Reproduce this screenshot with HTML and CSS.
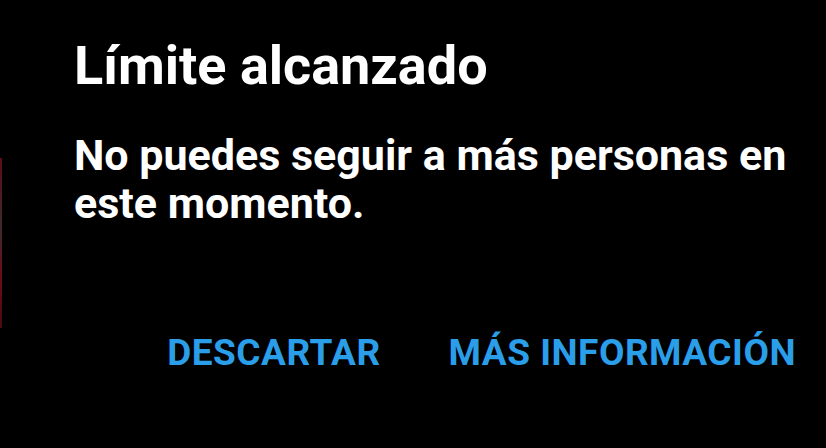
FILE: index.html
```html
<!DOCTYPE html>
<html lang="es">

<head>
    <meta charset="utf-8" />
    <title>Límite alcanzado</title>
    <link rel="stylesheet" href="styles.css">
</head>

<body>
    <div class="backdrop-edge"></div>
    <div class="dialog">
        <h1 class="dialog-title">Límite alcanzado</h1>
        <p class="dialog-message">No puedes seguir a más personas en este momento.</p>
        <div class="dialog-actions">
            <button type="button" class="btn-text">Descartar</button>
            <button type="button" class="btn-text">Más información</button>
        </div>
    </div>
</body>

</html>
```

FILE: styles.css
```css
html,
body {
    height: 100%;
}

body {
    margin: 0;
    overflow: hidden;
    background-color: #000;
    font-family: Roboto, "Liberation Sans", sans-serif;
    position: relative;
}

/* sliver of the screen behind the dialog */
.backdrop-edge {
    position: absolute;
    left: 0;
    top: 158px;
    width: 2px;
    height: 170px;
    background: linear-gradient(#5e0c14, #3d2a2c 40%, #6a0d16 70%, #4a0a10);
}

.dialog {
    padding: 34px 30px 0 74px;
}

.dialog-title {
    margin: 0;
    color: #fff;
    font-size: 54px;
    font-weight: 700;
    line-height: 64px;
}

.dialog-message {
    margin: 33px 0 0;
    color: #fff;
    font-size: 43px;
    font-weight: 700;
    line-height: 48px;
}

.dialog-actions {
    display: flex;
    justify-content: flex-end;
    gap: 68px;
    margin-top: 104px;
}

.btn-text {
    padding: 0;
    border: 0;
    background: none;
    color: #2a9ee8;
    font-family: inherit;
    font-size: 37px;
    font-weight: 700;
    letter-spacing: 0.5px;
    text-transform: uppercase;
    line-height: 44px;
}
```
